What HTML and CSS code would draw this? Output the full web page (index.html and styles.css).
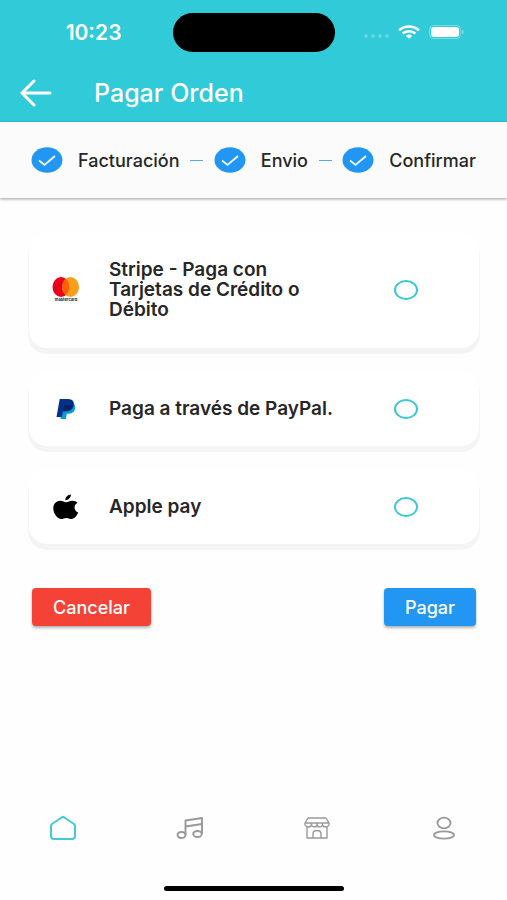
FILE: index.html
```html
<!DOCTYPE html>
<html lang="es">
<head>
<meta charset="utf-8">
<meta name="viewport" content="width=device-width, initial-scale=1">
<title>Pagar Orden</title>
<link rel="stylesheet" href="styles.css">
</head>
<body>
<header class="header">
  <div class="status">
    <span class="time">10:23</span>
    <span class="island"></span>
    <span class="indicators">
      <svg class="dots" width="26" height="6" viewBox="0 0 26 6" fill="#fff" opacity=".25"><circle cx="3" cy="3" r="1.900"/><circle cx="10" cy="3" r="1.900"/><circle cx="17" cy="3" r="1.900"/><circle cx="24" cy="3" r="1.900"/></svg>
      <svg width="22" height="14" viewBox="0 0 22 14" fill="none" stroke="#fff" stroke-width="2.600"><path d="M1 5.200C6.800.3 15.200.3 21 5.200M4.600 8.500C8.300 5.400 13.700 5.400 17.400 8.500"/><path d="M7.800 10.900Q11 8.200 14.200 10.900L11 13.800Z" fill="#fff" stroke="none"/></svg>
      <svg width="36" height="14" viewBox="0 0 36 14"><rect x=".5" y=".5" width="31" height="13" rx="4" fill="none" stroke="#fff" opacity=".35"/><rect x="2" y="2" width="28" height="10" rx="3" fill="#fff"/><path d="M33 5q3 2 0 4z" fill="#fff" opacity=".5"/></svg>
    </span>
  </div>
  <div class="toolbar">
    <button class="back" type="button" aria-label="Volver">
      <svg width="32" height="28" viewBox="0 0 32 28" fill="none" stroke="#fff" stroke-width="3" stroke-linecap="round" stroke-linejoin="round"><path d="M30 14H2M14 2 2 14 14 26"/></svg>
    </button>
    <h1 class="title">Pagar Orden</h1>
  </div>
</header>

<ol class="steps">
  <li class="step"><svg class="check" viewBox="0 0 32 26"><ellipse cx="16" cy="13" rx="15.500" ry="12.800" fill="#2196f3"/><path d="M8 13.500 13.500 18 24 9" fill="none" stroke="#fff" stroke-width="1.700"/></svg><span>Facturación</span></li>
  <li class="line" aria-hidden="true"></li>
  <li class="step"><svg class="check" viewBox="0 0 32 26"><ellipse cx="16" cy="13" rx="15.500" ry="12.800" fill="#2196f3"/><path d="M8 13.500 13.500 18 24 9" fill="none" stroke="#fff" stroke-width="1.700"/></svg><span>Envio</span></li>
  <li class="line" aria-hidden="true"></li>
  <li class="step"><svg class="check" viewBox="0 0 32 26"><ellipse cx="16" cy="13" rx="15.500" ry="12.800" fill="#2196f3"/><path d="M8 13.500 13.500 18 24 9" fill="none" stroke="#fff" stroke-width="1.700"/></svg><span>Confirmar</span></li>
</ol>

<main class="main">
  <form class="form">
    <label class="card card-tall">
      <svg class="logo" viewBox="0 0 28 28"><ellipse cx="9" cy="11" rx="8.500" ry="10" fill="#eb001b"/><ellipse cx="18.500" cy="11" rx="8.500" ry="10" fill="#f79e1b"/><path d="M13.750 2.800C18.300 7 18.300 15 13.750 19.200C9.200 15 9.200 7 13.750 2.800Z" fill="#ff5f00"/><text x="14" y="25" text-anchor="middle" class="brand">mastercard</text></svg>
      <span class="name">Stripe - Paga con Tarjetas de Crédito o Débito</span>
      <input class="radio" type="radio" name="pago" value="stripe">
    </label>
    <label class="card">
      <svg class="logo" viewBox="0 0 28 28"><path d="M10.500 7H19Q24 8.500 23 14Q22 18.800 16 18.800H14.800L13.900 24H8.500Z" fill="#009cde"/><path d="M7.700 4H16Q23 4 21.500 10.500Q20.200 16.300 14 16.300H11L9.800 22H4.500Z" fill="#003087"/><path d="M12.200 11.500Q12.500 10.300 13.700 10.300H21.500Q20 16.300 14 16.300H11Z" fill="#012169"/></svg>
      <span class="name">Paga a través de PayPal.</span>
      <input class="radio" type="radio" name="pago" value="paypal">
    </label>
    <label class="card">
      <svg class="logo" viewBox="0 0 28 28"><path d="M18.800 1.500C19.200 4.500 16.500 7.200 13.400 7.200C13 4.500 15.800 1.700 18.800 1.500ZM25.600 9.700C21.200 12 21.700 17.600 26.200 19.600C24.800 22.800 22.600 26 19.600 26C17.500 26 16.600 24.900 14.400 24.900C12.100 24.900 11 26 9.200 26C5.400 26 1.300 20.400 1.300 15.200C1.300 10.600 4.600 7.800 8.200 7.800C10.800 7.800 12.500 9.300 14.200 9.300C15.800 9.300 17.500 7.700 20.400 7.700C22.500 7.700 24.400 8.400 25.600 9.700Z"/></svg>
      <span class="name">Apple pay</span>
      <input class="radio" type="radio" name="pago" value="apple">
    </label>
    <div class="actions">
      <button class="btn btn-cancel" type="button">Cancelar</button>
      <button class="btn btn-pay" type="button">Pagar</button>
    </div>
  </form>
</main>

<nav class="nav">
  <a class="tab active" href="#inicio" aria-label="Inicio"><svg viewBox="0 0 28 26"><path d="M14 2Q15 2 16 3L25 9Q26 10 26 11V21Q26 24 23 24H5Q2 24 2 21V11Q2 10 3 9L12 3Q13 2 14 2Z" stroke-width="2"/></svg></a>
  <a class="tab" href="#musica" aria-label="Música"><svg viewBox="0 0 28 26"><g stroke-width="1.900"><path d="M9.500 20V5.500L26 3V19M9.500 11.500 26 9"/><ellipse cx="5.500" cy="20" rx="4" ry="3"/><ellipse cx="21.500" cy="19" rx="4.300" ry="3"/></g></svg></a>
  <a class="tab" href="#tienda" aria-label="Tienda"><svg viewBox="0 0 28 26"><g stroke-width="1.400"><path d="M5 3H23L26 8V10Q25 12 22.500 12Q20 12 19.500 10Q18.500 12 16.500 12Q14.500 12 14 10Q13.500 12 11.500 12Q9.500 12 8.500 10Q8 12 5.500 12Q3 12 2 10V8ZM2 8H26M8.500 8V10M14 8V10M19.500 8V10M4 12V23H24V12M10 23V19Q10 15.500 14 15.500Q18 15.500 18 19V23"/></g></svg></a>
  <a class="tab" href="#perfil" aria-label="Perfil"><svg viewBox="0 0 28 26"><g stroke-width="1.800"><ellipse cx="14" cy="8" rx="6.500" ry="5.300"/><ellipse cx="14" cy="20" rx="10" ry="3.700"/></g></svg></a>
</nav>
<div class="home-bar"></div>
</body>
</html>
```
FILE: styles.css
```css
* { box-sizing: border-box; }
body {
  margin: 0;
  min-height: 100vh;
  display: flex;
  flex-direction: column;
  background: #fefefe;
  color: #272727;
  font-family: Inter, "Liberation Sans", sans-serif;
}
.header { background: #30cad9; color: #fff; }
.status {
  display: grid;
  grid-template-columns: 1fr 162px 1fr;
  align-items: center;
  height: 64px;
}
.time { padding-right: 51px; text-align: right; font-size: 21px; font-weight: 600; }
.island { height: 39px; border-radius: 20px; background: #000; }
.indicators { display: flex; align-items: center; gap: 9px; padding-left: 28px; }
.dots { margin-top: 8px; }
.toolbar { display: flex; align-items: center; gap: 42px; height: 58px; padding: 0 20px; }
.back { display: flex; padding: 0; border: 0; background: none; }
.title { margin: 0; font-size: 25px; line-height: 28px; font-weight: 500; }

.steps {
  display: flex;
  align-items: center;
  justify-content: space-between;
  height: 76px;
  margin: 0;
  padding: 0 31px;
  list-style: none;
  background: #fbfbfb;
  box-shadow: 0 1px 3px rgba(0, 0, 0, .4);
  font-size: 18px;
  font-weight: 500;
}
.step { display: flex; align-items: center; gap: 15px; }
.check { width: 32px; height: 26px; }
.line { width: 13px; height: 1px; background: #55a9ec; }

.main { flex: 1; padding: 34px 28px 0 29px; }
.form { display: flex; flex-direction: column; gap: 23px; }
.card {
  display: grid;
  grid-template-columns: 28px 256px 24px;
  column-gap: 29px;
  align-items: center;
  min-height: 75px;
  padding: 0 23px;
  border-radius: 18px;
  background: #fff;
  box-shadow: 0 5px 1px 1px #f4f4f4;
}
.card-tall { min-height: 116px; }
.logo { width: 28px; height: 28px; }
.brand { font: 700 4px Inter, sans-serif; fill: #222; }
.name { max-width: 232px; font-size: 19px; line-height: 20px; font-weight: 600; }
.radio {
  appearance: none;
  width: 24px;
  height: 20px;
  margin: 0;
  border: 2px solid #3bc8d5;
  border-radius: 50%;
}
.radio:checked { background: #3bc8d5; }
.actions { display: flex; justify-content: space-between; padding: 21px 3px 0; }
.btn {
  height: 38px;
  padding: 0 21px;
  border: 0;
  border-radius: 4px;
  color: #fff;
  font: 500 18px Inter, "Liberation Sans", sans-serif;
  box-shadow: 0 2px 3px rgba(0, 0, 0, .3);
}
.btn-cancel { background: #f44336; }
.btn-pay { background: #2196f3; }

.nav { display: grid; grid-template-columns: repeat(4, 1fr); height: 64px; }
.tab { display: flex; align-items: center; justify-content: center; color: #999; }
.tab svg { width: 28px; height: 26px; fill: none; stroke: currentColor; stroke-linejoin: round; }
.active { color: #45c9d4; }
.home-bar { width: 180px; height: 5px; margin: 26px auto 9px; border-radius: 3px; background: #000; }
```
